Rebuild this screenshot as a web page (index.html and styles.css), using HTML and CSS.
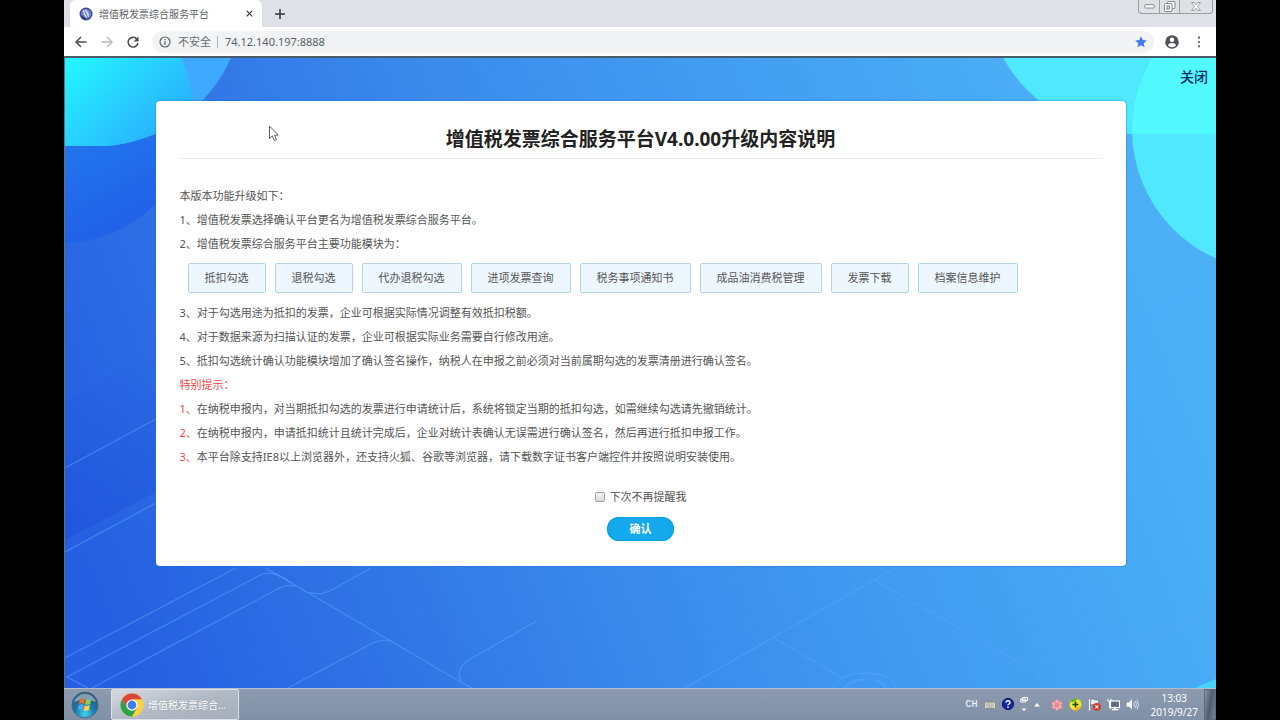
FILE: index.html
```html
<!DOCTYPE html>
<html lang="zh-CN">
<head>
<meta charset="utf-8">
<title>增值税发票综合服务平台</title>
<link rel="stylesheet" href="styles.css">
</head>
<body>
<div class="desktop">
  <header class="tabstrip">
    <div class="tab">
      <svg class="favicon" viewBox="0 0 14 14" aria-hidden="true">
        <circle cx="7" cy="7" r="6.500" fill="#3b4690"/>
        <circle cx="7" cy="7" r="5" fill="#7584cf"/>
        <path d="M4 3.200l3.300 7.300M6.200 2.800c2 2 3.200 4.400 3.200 7" stroke="#dfe4fb" stroke-width="1.300" fill="none"/>
        <path d="M3 8.500a4.500 4.500 0 0 0 4 3.200" stroke="#26307c" stroke-width="1.200" fill="none"/>
      </svg>
      <span class="tab-title">增值税发票综合服务平台</span>
      <button class="icon-button" aria-label="关闭标签页">
        <svg width="7" height="7" viewBox="0 0 7 7"><path d="M.7.7l5.600 5.600M6.300.7L.7 6.300" stroke="#3c4043" stroke-width="1.200"/></svg>
      </button>
    </div>
    <button class="icon-button new-tab" aria-label="新标签页">
      <svg width="10" height="10" viewBox="0 0 10 10"><path d="M5 0v10M0 5h10" stroke="#2f3337" stroke-width="1.500"/></svg>
    </button>
    <div class="window-controls">
      <button aria-label="最小化"><svg width="11" height="5" viewBox="0 0 11 5"><rect x=".7" y=".7" width="9.600" height="3.300" rx="1" fill="#fff" stroke="#85888d"/></svg></button>
      <button aria-label="还原"><svg width="12" height="11" viewBox="0 0 12 11"><rect x="3.500" y=".5" width="7.500" height="7" rx="1" fill="#fff" stroke="#85888d"/><rect x=".5" y="2.500" width="7.500" height="8" rx="1" fill="#fff" stroke="#85888d"/><rect x="3" y="5" width="2.500" height="3" fill="#dee1e6" stroke="#85888d"/></svg></button>
      <button class="wide" aria-label="关闭窗口"><svg width="10" height="9" viewBox="0 0 11 10"><path d="M.6.6h3L5.500 3 7.400.6h3L7.200 5l3.200 4.400h-3L5.500 7 3.600 9.400h-3L3.800 5z" fill="#fff" stroke="#85888d" stroke-width=".9"/></svg></button>
    </div>
  </header>

  <nav class="toolbar">
    <button class="icon-button" aria-label="后退"><svg width="12" height="12" viewBox="0 0 12 12"><path d="M11.500 6H1.200M6 1L1 6l5 5" fill="none" stroke="#4a4d51" stroke-width="1.500"/></svg></button>
    <button class="icon-button" aria-label="前进"><svg width="12" height="12" viewBox="0 0 12 12"><path d="M.5 6h10.300M6 1l5 5-5 5" fill="none" stroke="#b9bbbe" stroke-width="1.400"/></svg></button>
    <button class="icon-button" aria-label="重新加载"><svg width="12" height="12" viewBox="0 0 12 12"><path d="M10 3.200A4.900 4.900 0 1 0 10.900 7" fill="none" stroke="#4a4d51" stroke-width="1.500"/><path d="M11.500.5v5h-5z" fill="#4a4d51"/></svg></button>
    <div class="omnibox">
      <svg width="12" height="12" viewBox="0 0 12 12" aria-hidden="true"><circle cx="6" cy="6" r="5" fill="none" stroke="#5f6368" stroke-width="1.200"/><path d="M6 5.200v3.600M6 3v1.300" stroke="#5f6368" stroke-width="1.300"/></svg>
      <label class="security" for="address">不安全</label>
      <input class="address" id="address" type="text" value="74.12.140.197:8888">
      <button class="icon-button" aria-label="书签"><svg width="12" height="12" viewBox="0 0 12 12"><path d="M6 .3l1.700 3.800 4.100.4-3.100 2.700.9 4.100L6 9.200l-3.600 2.100.9-4.100L.2 4.500l4.100-.4z" fill="#3f7de8"/></svg></button>
    </div>
    <button class="icon-button" aria-label="用户"><svg width="14" height="14" viewBox="0 0 14 14"><circle cx="7" cy="7" r="6.800" fill="#505357"/><circle cx="7" cy="4.800" r="2.200" fill="#fff"/><path d="M2.800 10.200c.8-1.500 2.500-2.200 4.200-2.200s3.400.7 4.200 2.200A5.200 5.200 0 0 1 7 12.300a5.200 5.200 0 0 1-4.200-2.100z" fill="#fff"/></svg></button>
    <button class="icon-button" aria-label="菜单"><svg width="12" height="12" viewBox="0 0 12 12"><g fill="#505357"><circle cx="6" cy="1.700" r="1.100"/><circle cx="6" cy="6" r="1.100"/><circle cx="6" cy="10.300" r="1.100"/></g></svg></button>
  </nav>

  <main class="page">
    <svg class="backdrop" viewBox="64 58 1152 630" preserveAspectRatio="none" aria-hidden="true">
      <defs>
        <linearGradient id="sky" gradientUnits="userSpaceOnUse" x1="80" y1="560" x2="1100" y2="160">
          <stop offset="0" stop-color="#265fe1"/><stop offset=".2" stop-color="#2f71e5"/><stop offset=".45" stop-color="#3a8aeb"/><stop offset=".7" stop-color="#429df1"/><stop offset="1" stop-color="#4bb0f6"/>
        </linearGradient>
        <linearGradient id="orb" gradientUnits="userSpaceOnUse" x1="70" y1="60" x2="170" y2="165">
          <stop offset="0" stop-color="#22f4ff"/><stop offset=".55" stop-color="#29c6ff"/><stop offset="1" stop-color="#28a0ff"/>
        </linearGradient>
        <linearGradient id="deep" gradientUnits="userSpaceOnUse" x1="80" y1="120" x2="130" y2="230">
          <stop offset="0" stop-color="#2178ee"/><stop offset="1" stop-color="#2160e7"/>
        </linearGradient>
        <linearGradient id="shade" x1="0" y1="0" x2="0" y2="1">
          <stop offset="0" stop-color="#1c4ed8" stop-opacity="0"/><stop offset="1" stop-color="#1c4ed8" stop-opacity=".5"/>
        </linearGradient>
        <clipPath id="left-round"><circle cx="61" cy="112" r="131"/></clipPath>
        <clipPath id="right-round"><circle cx="1272" cy="130" r="140"/></clipPath>
      </defs>
      <rect x="64" y="58" width="1152" height="630" fill="url(#sky)"/>
      <path d="M64 400l93-50v141l-93 49z" fill="url(#shade)"/>
      <circle cx="61" cy="112" r="131" fill="url(#deep)"/>
      <path d="M64 58h166A148 148 0 0 1 105 146H64z" fill="#3fa9ff"/>
      <path d="M64 58h166A148 148 0 0 1 105 146H64z" fill="url(#orb)" clip-path="url(#left-round)"/>
      <circle cx="1272" cy="130" r="140" fill="#50e8ff"/>
      <path d="M1003 58A148 148 0 0 0 1132 134h84V58z" fill="#50e8ff"/>
      <path d="M1003 58A148 148 0 0 0 1132 134h84V58z" fill="#52faff" clip-path="url(#right-round)"/>
      <path d="M1195 688l21-9v9z" fill="#46d4fb"/>
      <g fill="none" stroke="#58a8ff" stroke-opacity=".5" stroke-width="1.300">
        <path d="M64 468l93-50M64 552l93-50M64 658l171-90"/>
        <path d="M87 688l-21-11 188-99q10-6 18-4.500t18 9.500M91 688l184-98q10-6 20-4"/>
        <path d="M265 568l195 114 11 6M301 590q14 7 28 1l41-23"/>
        <path d="M287 688l85-45q7-4 18-2"/>
        <path d="M536 621l-68 39q-14 9-7 23"/>
        <path d="M684 688l211-120M874 580l190 108M1074 688l142-84M772 637l70 41M1126 328l90-46"/>
        <ellipse cx="864.500" cy="690" rx="32" ry="17"/>
        <path d="M844 688q4-7 20-9M875 680q7 2 11 8" stroke-width="2"/>
      </g>
    </svg>
    <button class="close-page">关闭</button>

    <section class="card">
      <h1>增值税发票综合服务平台V4.0.00升级内容说明</h1>
      <div class="notes">
        <p>本版本功能升级如下：</p>
        <p>1、增值税发票选择确认平台更名为增值税发票综合服务平台。</p>
        <p>2、增值税发票综合服务平台主要功能模块为：</p>
        <div class="modules">
          <button>抵扣勾选</button>
          <button>退税勾选</button>
          <button>代办退税勾选</button>
          <button>进项发票查询</button>
          <button>税务事项通知书</button>
          <button>成品油消费税管理</button>
          <button>发票下载</button>
          <button>档案信息维护</button>
        </div>
        <p>3、对于勾选用途为抵扣的发票，企业可根据实际情况调整有效抵扣税额。</p>
        <p>4、对于数据来源为扫描认证的发票，企业可根据实际业务需要自行修改用途。</p>
        <p>5、抵扣勾选统计确认功能模块增加了确认签名操作，纳税人在申报之前必须对当前属期勾选的发票清册进行确认签名。</p>
        <p class="alert">特别提示：</p>
        <p><span class="alert">1、</span>在纳税申报内，对当期抵扣勾选的发票进行申请统计后，系统将锁定当期的抵扣勾选，如需继续勾选请先撤销统计。</p>
        <p><span class="alert">2、</span>在纳税申报内，申请抵扣统计且统计完成后，企业对统计表确认无误需进行确认签名，然后再进行抵扣申报工作。</p>
        <p><span class="alert">3、</span>本平台除支持IE8以上浏览器外，还支持火狐、谷歌等浏览器，请下载数字证书客户端控件并按照说明安装使用。</p>
      </div>
      <div class="remind">
        <input type="checkbox" id="remind"><label for="remind">下次不再提醒我</label>
      </div>
      <button class="confirm">确认</button>
    </section>

    <svg class="cursor" width="12" height="17" viewBox="0 0 12 17" aria-hidden="true"><path d="M1.500 1v12.500l2.800-2.600 2 4.700 2.200-1-2-4.500h3.900z" fill="#fff" stroke="#5c5c68"/></svg>
  </main>

  <footer class="taskbar">
    <button class="start" aria-label="开始">
      <svg width="28" height="28" viewBox="0 0 28 28">
        <defs><radialGradient id="start-glow" cx=".5" cy=".85" r=".85"><stop offset="0" stop-color="#3fd6f2"/><stop offset=".45" stop-color="#1c77ac"/><stop offset="1" stop-color="#31526f"/></radialGradient></defs>
        <circle cx="14" cy="14" r="13" fill="url(#start-glow)" stroke="#4a6880"/>
        <path d="M3 11a11.500 11.500 0 0 1 22 0q-11-5-22 0z" fill="#fff" opacity=".4"/>
        <path d="M9 8.500q2.500-2 5-.6l-1 5q-2.600-1.300-5.200.4z" fill="#ee6a30"/>
        <path d="M15 8.300q2.500 1.300 5.300-.3l-1.100 5q-2.700 1.500-5.200.2z" fill="#98cc48"/>
        <path d="M7.600 14.300q2.600-1.700 5.200-.4l-1.100 5q-2.500-1.300-5.100.4z" fill="#52a8ee"/>
        <path d="M13.800 14.300q2.500 1.300 5.200-.2l-1.200 5q-2.500 1.500-5.100.2z" fill="#ffd34a"/>
      </svg>
    </button>
    <button class="task">
      <svg width="24" height="24" viewBox="0 0 24 24" aria-hidden="true">
        <circle cx="12" cy="12" r="11.500" fill="#fdd13e"/>
        <path d="M2.040 6.250A11.500 11.500 0 0 1 21.960 6.250H12L7.020 14.900z" fill="#dc4638"/>
        <path d="M2.040 6.250A11.500 11.500 0 0 0 12 23.500l5-8.600-5 2.800-5-2.800z" fill="#2ba24c"/>
        <circle cx="12" cy="12" r="5.600" fill="#fff"/><circle cx="12" cy="12" r="4.400" fill="#3e7eea"/>
      </svg>
      <span>增值税发票综合...</span>
    </button>
    <div class="tray">
      <span class="ime">CH</span>
      <svg width="12" height="8" viewBox="0 0 12 8" aria-hidden="true"><rect x=".5" y="1" width="11" height="6.500" rx="1" fill="#d9d8cf" stroke="#8b8b86"/><path d="M2 3h8M2 4.700h8M3.500 6.200h5" stroke="#99998f" stroke-dasharray="1 .6"/></svg>
      <svg width="12" height="14" viewBox="0 0 12 14" aria-hidden="true"><circle cx="6" cy="6" r="5.600" fill="#1724a4" stroke="#0b1267"/><path d="M4 4.600q.1-1.900 2-1.900t2 1.700q0 1-1.100 1.600T6 7.400M6 8.500v1.500" fill="none" stroke="#fff" stroke-width="1.400"/></svg>
      <svg width="8" height="18" viewBox="0 0 8 18" aria-hidden="true"><path d="M2.500 1.500h5v3h-5zM.8 3h5v3h-5z" fill="#8493a9" stroke="#fff"/><path d="M1.500 12.500h5L4 15z" fill="#fff"/></svg>
      <svg width="6" height="5" viewBox="0 0 6 5" aria-hidden="true"><path d="M0 4.500h6L3 1z" fill="#fff"/></svg>
      <svg class="first-app" width="12" height="12" viewBox="0 0 12 12" aria-hidden="true"><g fill="#f3b3b6" stroke="#dc7f89" stroke-width=".7"><circle cx="6" cy="2.800" r="2.100"/><circle cx="9" cy="4.600" r="2.100"/><circle cx="9" cy="8" r="2.100"/><circle cx="6" cy="9.400" r="2.100"/><circle cx="3" cy="8" r="2.100"/><circle cx="3" cy="4.600" r="2.100"/></g><circle cx="6" cy="6" r="2.200" fill="#e08a94"/></svg>
      <svg width="13" height="13" viewBox="0 0 13 13" aria-hidden="true"><circle cx="6.500" cy="6.500" r="6" fill="#f0e62c"/><path d="M1 4a6 6 0 0 1 8-3L4 4z" fill="#5bb038"/><path d="M12 9a6 6 0 0 1-8 3l5-3z" fill="#f0b020"/><path d="M6.500 3.500v6M3.500 6.500h6" stroke="#174d18" stroke-width="1.700"/></svg>
      <svg width="13" height="13" viewBox="0 0 13 13" aria-hidden="true"><path d="M1.500 1v11.500" stroke="#fff" stroke-width="1.200"/><path d="M2.500 1.500q2.500-1 4 0t4 0V7q-2.500 1-4 0t-4 0z" fill="#e8ecf2" stroke="#5d6878" stroke-width=".6"/><circle cx="8.800" cy="8.800" r="3.900" fill="#d53529"/><path d="M7.300 7.300l3 3M10.300 7.300l-3 3" stroke="#fff" stroke-width="1.100"/></svg>
      <svg width="13" height="13" viewBox="0 0 13 13" aria-hidden="true"><rect x="3.500" y="3" width="9" height="6.500" fill="#5d6b80" stroke="#fff" stroke-width="1.200"/><path d="M5 11.700h6.500M8 9.500v2" stroke="#fff" stroke-width="1.300"/><path d="M1 .8v2.500h3V.8M2.500 3.500V9q0 1.500 1.500 2" stroke="#fff" fill="none"/></svg>
      <svg width="13" height="13" viewBox="0 0 13 13" aria-hidden="true"><path d="M.7 4.500h2.200L6 1.300v10.400L2.900 8.500H.7z" fill="#fff"/><path d="M7.800 4.500q1.200 2 0 4M9.300 3q2.400 3.500 0 7M11 1.600q3 4.900 0 9.800" fill="none" stroke="#e8edf3" stroke-width=".9"/></svg>
      <div class="clock"><span>13:03</span><span>2019/9/27</span></div>
      <button class="show-desktop" aria-label="显示桌面"></button>
    </div>
  </footer>
</div>
</body>
</html>
```
FILE: styles.css
```css
* {
  box-sizing: border-box;
}

body {
  margin: 0;
  background: #000;
  color: #555;
  font: 11px/24px "Noto Sans", "Noto Sans CJK SC", sans-serif;
}

button,
input {
  margin: 0;
  padding: 0;
  border: 0;
  background: none;
  color: inherit;
  font: inherit;
}

svg {
  flex: none;
}

.desktop {
  display: flex;
  flex-direction: column;
  min-height: 100vh;
  margin: 0 5%;
}

.icon-button {
  display: grid;
  place-items: center;
  flex: none;
}

/* Browser frame */
.tabstrip {
  display: flex;
  align-items: center;
  height: 27px;
  padding-left: 6px;
  background: #dee1e6;
}

.tab {
  display: flex;
  align-items: center;
  gap: 6px;
  width: 192px;
  height: 27px;
  padding: 0 9px;
  border-radius: 6px 6px 0 0;
  background: #fff;
}

.favicon {
  width: 14px;
  height: 14px;
}

.tab-title {
  flex: 1;
  color: #606367;
  font-size: 10px;
}

.new-tab {
  margin-left: 13px;
}

.window-controls {
  display: flex;
  align-self: flex-start;
  height: 14px;
  margin: 0 3px 0 auto;
  border: 1px solid #9b9ea3;
  border-top: 0;
  border-radius: 0 0 4px 4px;
}

.window-controls button {
  display: grid;
  place-items: center;
  width: 20px;
}

.window-controls button + button {
  border-left: 1px solid #9b9ea3;
}

.window-controls .wide {
  width: 33px;
}

.toolbar {
  display: flex;
  align-items: center;
  gap: 14px;
  height: 31px;
  padding: 0 11px;
  border-bottom: 2px solid #4b5c69;
  background: #fff;
}

.omnibox {
  display: flex;
  flex: 1;
  align-items: center;
  height: 22px;
  margin: 0 -3px 0 -1px;
  padding: 0 7px;
  border-radius: 11px;
  background: #f1f3f4;
}

.security {
  margin-left: 7px;
  padding-right: 6px;
  border-right: 1px solid #b4b7bb;
  color: #6a6e73;
  line-height: 12px;
}

.address {
  flex: 1;
  margin-left: 7px;
  color: #5a5e63;
}

/* Web page */
.page {
  position: relative;
  display: flex;
  flex: 1;
  flex-direction: column;
  align-items: center;
  padding: 43px 0;
  border-left: 1px solid #5d6f8c;
}

.backdrop {
  position: absolute;
  inset: 0;
  width: 100%;
  height: 100%;
}

.close-page {
  position: absolute;
  top: 7px;
  right: 8px;
  color: #10316f;
  font-size: 14px;
  font-weight: 500;
}

.card {
  position: relative;
  display: flex;
  flex-direction: column;
  align-items: center;
  width: calc(100% - 181px);
  min-width: 880px;
  padding: 24px 24px 25px;
  border-radius: 4px;
  background: #fff;
  box-shadow: 0 0 2px #0878d8;
}

h1 {
  align-self: stretch;
  margin: 0;
  padding-bottom: 4px;
  border-bottom: 1px solid #ececec;
  color: #222;
  font-size: 19px;
  font-weight: 700;
  line-height: 29px;
  text-align: center;
}

.notes {
  align-self: stretch;
  margin-top: 25px;
}

.notes p {
  margin: 0;
}

.notes .alert {
  color: #f44646;
}

.modules {
  display: flex;
  flex-wrap: wrap;
  gap: 9px;
  margin: 7px 8px 8px;
}

.modules button {
  height: 30px;
  padding: 0 16px;
  border: 1px solid #b5d3e6;
  border-radius: 2px;
  background: #eef7fe;
}

.remind {
  display: flex;
  align-items: center;
  gap: 5px;
  margin-top: 16px;
}

.remind input {
  appearance: none;
  width: 10px;
  height: 10px;
  border: 1px solid #a3a3a3;
  border-radius: 2px;
  background: linear-gradient(#f1f1f1, #dcdcdc);
}

.remind input:checked {
  background: #14a8ec;
}

.confirm {
  width: 67px;
  height: 24px;
  margin-top: 8px;
  border-radius: 12px;
  background: #14a8ec;
  box-shadow: inset 0 0 1px 1px #05a0e4;
  color: #fff;
  font-weight: 700;
}

.cursor {
  position: absolute;
  top: 67px;
  left: 203px;
}

/* Taskbar */
.taskbar {
  display: flex;
  align-items: center;
  height: 32px;
  padding-left: 7px;
  border-top: 1px solid #b3bfd1;
  background: linear-gradient(#8c9bb0, #8090a6);
  color: #fff;
  font-size: 10px;
}

.start {
  display: grid;
}

.task {
  display: flex;
  align-items: center;
  gap: 4px;
  width: 128px;
  height: 31px;
  margin-left: 12px;
  padding-left: 8px;
  border: 1px solid #dce1e8;
  border-radius: 2px;
  background: linear-gradient(165deg, #d6dae0, #b3bac5 50%, #a4adba);
  text-shadow: 0 0 2px #8d96a4;
}

.tray {
  display: flex;
  align-items: center;
  gap: 6px;
  height: 100%;
  margin-left: auto;
}

.first-app {
  margin-left: 5px;
}

.ime {
  font-family: "Liberation Mono", monospace;
}

.clock {
  display: flex;
  flex-direction: column;
  align-items: center;
  margin-left: 6px;
  line-height: 14px;
}

.show-desktop {
  align-self: stretch;
  width: 12px;
  border: 1px solid #5d6b80;
  background: linear-gradient(100deg, #8995a8, #4f5d72 50%, #77859a);
}
```
